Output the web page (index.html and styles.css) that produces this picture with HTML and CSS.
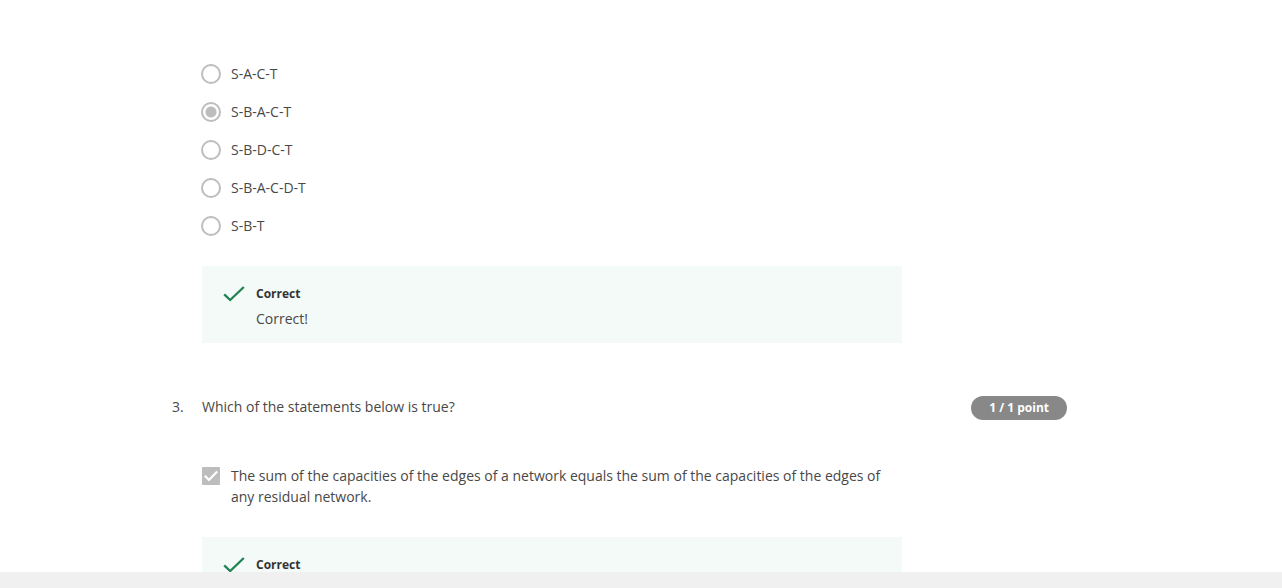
FILE: index.html
```html
<!DOCTYPE html>
<html lang="en">
<head>
<meta charset="utf-8">
<title>Quiz</title>
<link rel="stylesheet" href="styles.css">
</head>
<body>
<main class="page">
  <section class="question">
    <div class="body">
      <fieldset class="options">
        <label class="option"><input class="radio" type="radio" name="path" disabled><span>S-A-C-T</span></label>
        <label class="option"><input class="radio" type="radio" name="path" checked disabled><span>S-B-A-C-T</span></label>
        <label class="option"><input class="radio" type="radio" name="path" disabled><span>S-B-D-C-T</span></label>
        <label class="option"><input class="radio" type="radio" name="path" disabled><span>S-B-A-C-D-T</span></label>
        <label class="option"><input class="radio" type="radio" name="path" disabled><span>S-B-T</span></label>
      </fieldset>
      <div class="feedback">
        <svg class="tick" viewBox="0 0 22 16" aria-hidden="true"><path d="M1.2 8.3 7.2 14 20.8 1"/></svg>
        <div>
          <h3 class="verdict">Correct</h3>
          <p class="note">Correct!</p>
        </div>
      </div>
    </div>
  </section>
  <section class="question">
    <span class="number">3.</span>
    <div class="body">
      <p class="prompt">Which of the statements below is true?</p>
      <label class="option statement">
        <span class="box">
          <input class="checkbox" type="checkbox" checked disabled>
          <svg class="mark" viewBox="0 0 18 18" aria-hidden="true"><path d="M2.8 8.8 7 13 15.2 4.4"/></svg>
        </span>
        <span>The sum of the capacities of the edges of a network equals the sum of the capacities of the edges of any residual network.</span>
      </label>
      <div class="feedback">
        <svg class="tick" viewBox="0 0 22 16" aria-hidden="true"><path d="M1.2 8.3 7.2 14 20.8 1"/></svg>
        <div>
          <h3 class="verdict">Correct</h3>
        </div>
      </div>
    </div>
    <span class="points">1 / 1 point</span>
  </section>
</main>
<footer class="bar"></footer>
</body>
</html>
```
FILE: styles.css
```css
* { box-sizing: border-box; }
body {
  margin: 0;
  height: 100vh;
  display: flex;
  flex-direction: column;
  overflow: hidden;
  background: #fff;
  color: #484848;
  font: 14px/21px "Open Sans", sans-serif;
}
.page {
  flex: 1;
  min-height: 0;
  overflow: hidden;
  padding: 64px 215px 0 172px;
}
.question {
  display: grid;
  grid-template-columns: 30px minmax(0, 700px) 1fr auto;
  align-items: start;
}
.question + .question { margin-top: 53px; }
.number { grid-column: 1; }
.body { grid-column: 2; }
.points {
  grid-column: 4;
  padding: 0 18px;
  border-radius: 12px;
  background: #888;
  color: #fff;
  font-size: 12px;
  font-weight: 700;
  line-height: 24px;
}
.options {
  display: flex;
  flex-direction: column;
  gap: 18px;
  margin: 0;
  padding: 0;
  border: 0;
}
.option {
  display: flex;
  gap: 10px;
  margin-left: -1px;
  line-height: 20px;
}
.radio {
  appearance: none;
  flex: none;
  width: 20px;
  height: 20px;
  margin: 0;
  border: 2px solid #bdbdbd;
  border-radius: 50%;
}
.radio:checked { background: radial-gradient(circle, #bdbdbd 5px, transparent 6px); }
.prompt { margin: 0 0 48px; }
.statement { line-height: 21px; }
.box {
  flex: none;
  display: grid;
  width: 20px;
  height: 22px;
  place-items: center;
}
.checkbox, .mark {
  grid-area: 1 / 1;
  width: 18px;
  height: 18px;
  margin: 0;
}
.checkbox {
  appearance: none;
  border-radius: 1px;
  background: #bdbdbd;
}
.mark { fill: none; stroke: #fff; stroke-width: 2.2; }
.feedback {
  display: flex;
  gap: 11px;
  margin-top: 30px;
  padding: 20px 20px 14px 21px;
  background: #f3faf8;
}
.tick {
  flex: none;
  width: 22px;
  height: 16px;
  fill: none;
  stroke: #1f8354;
  stroke-width: 2.3;
}
.verdict {
  margin: 0;
  color: #333;
  font-size: 12px;
  font-weight: 700;
  line-height: 16px;
}
.note { margin: 6px 0 0; }
.bar {
  flex: none;
  height: 16px;
  background: #f0f0f0;
}
```
